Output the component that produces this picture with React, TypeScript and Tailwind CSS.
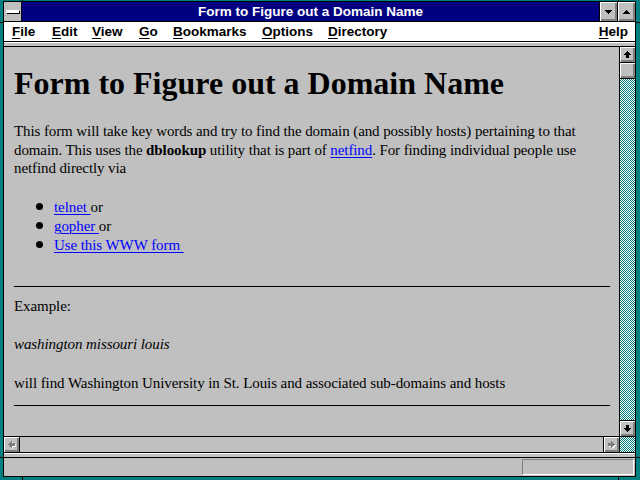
import React from "react";

type R = [number, number, number, number];
const UP: R[] = [[3, 0, 1, 1], [2, 1, 3, 1], [1, 2, 5, 1], [0, 3, 7, 1], [2, 4, 3, 3]];
const DOWN: R[] = [[2, 0, 3, 3], [0, 3, 7, 1], [1, 4, 5, 1], [2, 5, 3, 1], [3, 6, 1, 1]];
const LEFT: R[] = [[0, 3, 1, 1], [1, 2, 1, 3], [2, 1, 1, 5], [3, 0, 1, 7], [4, 2, 3, 3]];
const RIGHT: R[] = [[0, 2, 3, 3], [3, 0, 1, 7], [4, 1, 1, 5], [5, 2, 1, 3], [6, 3, 1, 1]];
const TRI_DOWN: R[] = [[0, 0, 7, 1], [1, 1, 5, 1], [2, 2, 3, 1], [3, 3, 1, 1]];
const TRI_UP: R[] = [[3, 0, 1, 1], [2, 1, 3, 1], [1, 2, 5, 1], [0, 3, 7, 1]];

function Pix({ rects, w, h, disabled }: { rects: R[]; w: number; h: number; disabled?: boolean }) {
  const d = disabled ? 1 : 0;
  return (
    <svg width={w + d} height={h + d} shapeRendering="crispEdges" className="block">
      {disabled &&
        rects.map((r, i) => (
          <rect key={"s" + i} x={r[0] + 1} y={r[1] + 1} width={r[2]} height={r[3]} fill="#ffffff" />
        ))}
      {rects.map((r, i) => (
        <rect key={i} x={r[0]} y={r[1]} width={r[2]} height={r[3]} fill={disabled ? "#808080" : "#000000"} />
      ))}
    </svg>
  );
}

const bevel =
  "bg-[#c0c0c0] shadow-[inset_1px_1px_0_#ffffff,inset_-1px_-1px_0_#808080,inset_-2px_-2px_0_#808080] flex items-center justify-center";
const checker =
  "bg-[repeating-conic-gradient(#008080_0%_25%,#ffffff_0%_50%)] bg-[length:2px_2px]";

function MenuItem({ k, rest, w }: { k: string; rest: string; w?: string }) {
  return (
    <span className={w ?? ""}>
      <span className="underline decoration-1 underline-offset-[2px]">{k}</span>
      {rest}
    </span>
  );
}

const link = "text-[#0000ff] underline decoration-1 underline-offset-[2px]";

export default function App() {
  return (
    <div className="relative w-[640px] h-[480px] overflow-hidden bg-[#008080] pl-[3px] pt-[1px] pr-[4px] pb-[3px]">
      {/* frame sizing ticks */}
      <div className="absolute left-[22px] top-0 w-px h-px bg-black" />
      <div className="absolute left-[618px] top-0 w-px h-px bg-black" />
      <div className="absolute left-[22px] bottom-0 w-px h-[3px] bg-black" />
      <div className="absolute left-[618px] bottom-0 w-px h-[3px] bg-black" />
      <div className="absolute left-0 top-[457px] w-[3px] h-px bg-black" />
      <div className="absolute right-0 top-[457px] w-[4px] h-px bg-black" />
      <div className="absolute left-0 top-[22px] w-[3px] h-px bg-black" />
      <div className="absolute right-0 top-[22px] w-[4px] h-px bg-black" />

      <div className="w-full h-full border border-black flex flex-col bg-[#c0c0c0] font-['Liberation_Sans',Arial,sans-serif]">
        {/* title bar */}
        <div className="h-[20px] shrink-0 flex border-b border-black">
          <div className="w-[18px] border-r border-black bg-[#c0c0c0] flex items-center justify-center">
            <div className="w-[13px] h-[3px] bg-white shadow-[1px_1px_0_#000000]" />
          </div>
          <div className="flex-1 bg-[#000080] text-white text-center text-[13.5px] leading-[19px] font-bold">
            Form to Figure out a Domain Name
          </div>
          <div className="w-[18px] border-l border-black flex">
            <div className={bevel + " flex-1"}>
              <Pix rects={TRI_DOWN} w={7} h={4} />
            </div>
          </div>
          <div className="w-[18px] border-l border-black flex">
            <div className={bevel + " flex-1"}>
              <Pix rects={TRI_UP} w={7} h={4} />
            </div>
          </div>
        </div>

        {/* menu bar */}
        <div className="h-[20px] shrink-0 flex border-b border-black bg-white text-black text-[13.5px] leading-[19px] font-bold pl-[8px] pr-[7px]">
          <MenuItem k="F" rest="ile" w="w-[40px]" />
          <MenuItem k="E" rest="dit" w="w-[40px]" />
          <MenuItem k="V" rest="iew" w="w-[47px]" />
          <MenuItem k="G" rest="o" w="w-[34px]" />
          <MenuItem k="B" rest="ookmarks" w="w-[89px]" />
          <MenuItem k="O" rest="ptions" w="w-[66px]" />
          <MenuItem k="D" rest="irectory" />
          <span className="flex-1" />
          <MenuItem k="H" rest="elp" />
        </div>
        <div className="h-[5px] shrink-0 border-t border-b border-t-white border-b-black bg-[#c0c0c0]" />

        {/* middle */}
        <div className="flex-1 flex min-h-0">
          <div className="flex-1 overflow-hidden pl-[10px] pr-[9px] font-['Liberation_Serif','Times_New_Roman',serif] text-black">
            <h1 className="mt-[17px] text-[32px] leading-[38px] font-bold whitespace-nowrap">
              Form to Figure out a Domain Name
            </h1>
            <p className="mt-[20px] text-[15px] leading-[18.5px] tracking-[-0.1px]">
              This form will take key words and try to find the domain (and possibly hosts) pertaining to that
              domain. This uses the <b>dblookup</b> utility that is part of <a className={link}>netfind</a>. For
              finding individual people use netfind directly via
            </p>
            <ul className="mt-[20.5px] text-[15px] leading-[19px] tracking-[-0.08px]">
              <li className="flex">
                <span className="mt-[5px] ml-[22px] w-[7px] h-[7px] rounded-full bg-black shrink-0" />
                <span className="ml-[11px]">
                  <a className={link}>telnet </a>or
                </span>
              </li>
              <li className="flex">
                <span className="mt-[5px] ml-[22px] w-[7px] h-[7px] rounded-full bg-black shrink-0" />
                <span className="ml-[11px]">
                  <a className={link}>gopher </a>or
                </span>
              </li>
              <li className="flex">
                <span className="mt-[5px] ml-[22px] w-[7px] h-[7px] rounded-full bg-black shrink-0" />
                <span className="ml-[11px]">
                  <a className={link}>Use this WWW form{"\u00a0"}</a>
                </span>
              </li>
            </ul>
            <div className="mt-[31px] h-px bg-black" />
            <p className="mt-[10px] text-[15px] leading-[19px] tracking-[-0.08px]">Example:</p>
            <p className="mt-[19px] text-[15px] leading-[19px] tracking-[-0.08px]">
              <i>washington missouri louis</i>
            </p>
            <p className="mt-[20px] text-[15px] leading-[19px] tracking-[-0.08px]">
              will find Washington University in St. Louis and associated sub-domains and hosts
            </p>
            <div className="mt-[12px] h-px bg-black" />
          </div>

          {/* vertical scrollbar */}
          <div className="w-[16px] shrink-0 border-l border-black flex flex-col">
            <div className={bevel + " h-[15px] shrink-0"}>
              <Pix rects={UP} w={7} h={7} />
            </div>
            <div className="h-[16px] shrink-0 border-t border-black flex flex-col">
              <div className={bevel + " flex-1"} />
            </div>
            <div className={"flex-1 border-t border-black " + checker} />
            <div className="h-[16px] shrink-0 border-t border-black flex flex-col">
              <div className={bevel + " flex-1"}>
                <Pix rects={DOWN} w={7} h={7} />
              </div>
            </div>
          </div>
        </div>

        {/* horizontal scrollbar */}
        <div className="h-[17px] shrink-0 border-t border-b border-black flex">
          <div className="w-[16px] border-r border-black flex">
            <div className={bevel + " flex-1"}>
              <Pix rects={LEFT} w={7} h={7} disabled />
            </div>
          </div>
          <div className="flex-1 bg-[#c0c0c0]" />
          <div className="w-[16px] border-l border-black flex">
            <div className={bevel + " flex-1"}>
              <Pix rects={RIGHT} w={7} h={7} disabled />
            </div>
          </div>
          <div className={"w-[16px] border-l border-black " + checker} />
        </div>
        <div className="h-[5px] shrink-0 border-t border-b border-t-white border-b-black bg-[#c0c0c0]" />

        {/* status bar */}
        <div className="h-[18px] shrink-0 flex justify-end bg-[#c0c0c0]">
          <div className="mt-[1px] mr-[1px] w-[112px] h-[16px] border border-t-[#808080] border-l-[#808080] border-b-white border-r-white" />
        </div>
      </div>
    </div>
  );
}
